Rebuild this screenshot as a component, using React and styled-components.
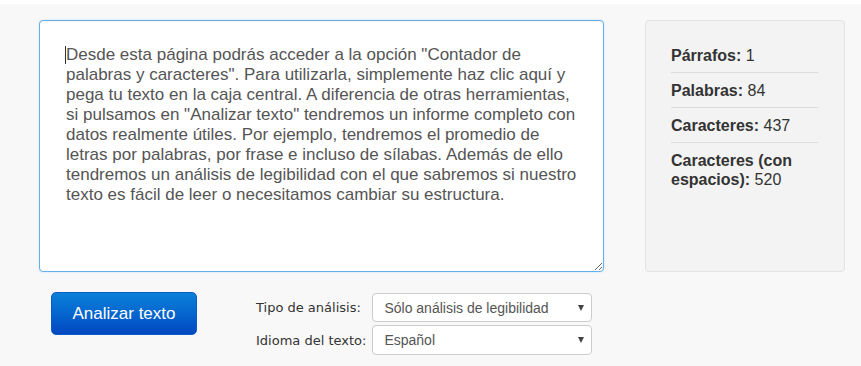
import * as React from "react"
import styled, { createGlobalStyle } from "styled-components"

const GlobalStyle = createGlobalStyle`
    html, body {
        margin: 0;
        padding: 0;
        background: #f8f8f8;
    }
    body {
        font-family: "Liberation Sans", Arial, sans-serif;
    }
`

const Page = styled.div`
    border-top: 4px solid #fff;
    padding: 16px 16px 0 39px;
    display: flex;
    gap: 41px;
    align-items: flex-start;
`

const Main = styled.div`
    width: 565px;
    display: flex;
    flex-direction: column;
`

const Editor = styled.div`
    position: relative;
`

const TextBox = styled.textarea`
    display: block;
    box-sizing: border-box;
    width: 565px;
    height: 252px;
    margin: 0;
    padding: 24px 25px 10px 26px;
    border: 1px solid #66afe9;
    border-radius: 4px;
    background: #fff;
    color: #555;
    font-family: "Liberation Sans", Arial, sans-serif;
    font-size: 17px;
    line-height: 20px;
    outline: none;
    box-shadow: inset 0 1px 1px rgba(0, 0, 0, 0.05), 0 0 2px rgba(102, 175, 233, 0.35);
    caret-color: transparent;
`

/* caret drawn over the textarea, since the headless shot has no blinking cursor */
const Caret = styled.span`
    position: absolute;
    left: 26px;
    top: 26px;
    width: 1px;
    height: 18px;
    background: #333;
    pointer-events: none;
`

const Actions = styled.div`
    display: flex;
    align-items: flex-start;
    margin-top: 20px;
    padding-left: 12px;
    gap: 59px;
`

const AnalyzeButton = styled.button`
    width: 146px;
    height: 43px;
    border: 1px solid #0b5bc4;
    border-radius: 5px;
    background: linear-gradient(to bottom, #0a80d8 0%, #0566cf 50%, #0047bf 100%);
    color: #fff;
    font-family: "Liberation Sans", Arial, sans-serif;
    font-size: 17px;
    cursor: pointer;
    padding: 0;
`

const Options = styled.div`
    display: grid;
    grid-template-columns: auto 220px;
    column-gap: 6px;
    row-gap: 3px;
    align-items: center;
    margin-top: 1px;
`

const Label = styled.label`
    font-family: "DejaVu Sans", Verdana, sans-serif;
    font-size: 13px;
    color: #333;
    white-space: nowrap;
`

const SelectWrap = styled.div`
    position: relative;

    &::after {
        content: "";
        position: absolute;
        right: 8px;
        top: 12px;
        border-left: 3px solid transparent;
        border-right: 3px solid transparent;
        border-top: 6px solid #444;
        pointer-events: none;
    }
`

const Select = styled.select`
    box-sizing: border-box;
    width: 220px;
    height: ${p => p.$h}px;
    padding: 0 20px 0 11px;
    border: 1px solid #ccc;
    border-radius: 4px;
    background: #fff;
    color: #555;
    font-family: "Liberation Sans", Arial, sans-serif;
    font-size: 14px;
    appearance: none;
    -webkit-appearance: none;
    outline: none;
`

const Stats = styled.div`
    box-sizing: border-box;
    width: 200px;
    height: 252px;
    padding: 17px 26px 0 25px;
    background: #f3f3f3;
    border: 1px solid #e3e3e3;
    border-radius: 4px;
`

const StatList = styled.ul`
    list-style: none;
    margin: 0;
    padding: 0;
`

const StatRow = styled.li`
    padding: ${p => (p.$last ? "8px 0 0" : "8px 0 7px")};
    border-bottom: ${p => (p.$last ? "none" : "1px solid #dcdcdc")};
    font-size: 16px;
    line-height: 19px;
    color: #333;

    b {
        font-weight: bold;
    }
`

const stats = [
    { label: "Párrafos:", value: 1 },
    { label: "Palabras:", value: 84 },
    { label: "Caracteres:", value: 437 },
    { label: "Caracteres (con espacios):", value: 520 },
]

const sample = 'Desde esta página podrás acceder a la opción "Contador de palabras y caracteres". Para utilizarla, simplemente haz clic aquí y pega tu texto en la caja central. A diferencia de otras herramientas, si pulsamos en "Analizar texto" tendremos un informe completo con datos realmente útiles. Por ejemplo, tendremos el promedio de letras por palabras, por frase e incluso de sílabas. Además de ello tendremos un análisis de legibilidad con el que sabremos si nuestro texto es fácil de leer o necesitamos cambiar su estructura.'

const App = () => {
    const [text, setText] = React.useState(sample)

    return (
        <>
            <GlobalStyle />
            <Page>
                <Main>
                    <Editor>
                        <TextBox value={text} onChange={e => setText(e.target.value)} spellCheck={false} />
                        <Caret />
                    </Editor>
                    <Actions>
                        <AnalyzeButton>Analizar texto</AnalyzeButton>
                        <Options>
                            <Label>Tipo de análisis:</Label>
                            <SelectWrap>
                                <Select $h={29} defaultValue="legibilidad">
                                    <option value="legibilidad">Sólo análisis de legibilidad</option>
                                    <option value="completo">Análisis completo</option>
                                </Select>
                            </SelectWrap>
                            <Label>Idioma del texto:</Label>
                            <SelectWrap>
                                <Select $h={30} defaultValue="es">
                                    <option value="es">Español</option>
                                    <option value="en">English</option>
                                </Select>
                            </SelectWrap>
                        </Options>
                    </Actions>
                </Main>
                <Stats>
                    <StatList>
                        {stats.map((s, i) => (
                            <StatRow key={s.label} $last={i === stats.length - 1}>
                                <b>{s.label}</b> {s.value}
                            </StatRow>
                        ))}
                    </StatList>
                </Stats>
            </Page>
        </>
    )
}

export default App
